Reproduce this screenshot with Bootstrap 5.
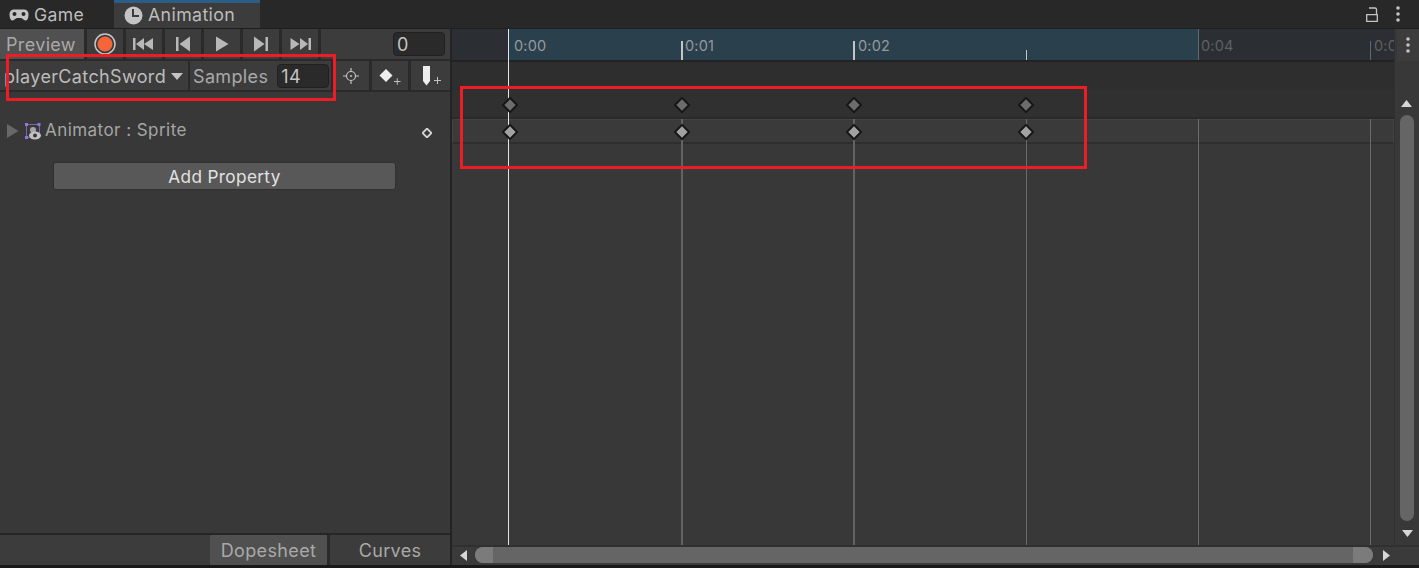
<!DOCTYPE html>
<html lang="en">
<head>
<meta charset="utf-8">
<title>Animation</title>
<link href="https://cdn.jsdelivr.net/npm/bootstrap@5.3.0/dist/css/bootstrap.min.css" rel="stylesheet">
<style>
html,body{height:568px;overflow:hidden;background:#191919;}
body{font-family:Inter,"Liberation Sans",sans-serif;font-size:18px;color:#bdbdbd;position:relative;letter-spacing:.35px;}
.shell{width:1419px;height:565px;background:#232323;}
.tabbar{height:29px;background:#282828;border-bottom:1px solid #1f1f1f;}
.utab{height:28px;}
.utab-game{width:114px;padding-left:9px;padding-top:2px;gap:5px;font-size:17.6px;}
.utab-anim{width:146px;padding-left:10px;gap:5px;background:#3c3c3c;border-top:3px solid #2c5d87;font-size:17.8px;}
.tabend{margin-left:auto;padding-right:19px;gap:18px;height:28px;}
.workarea{height:536px;}
.leftp{width:452px;background:#383838;border-right:2px solid #232323;}
.bar{height:32px;background:#3c3c3c;border-bottom:2px solid #2a2a2a;}
.tbtn{width:39px;background:#3c3c3c;border-left:3px solid #2a2a2a;height:30px;}
.preview{width:84px;background:#505050;padding-left:6px;line-height:32px;color:#a9a9a9;height:30px;white-space:nowrap;overflow:hidden;}
.framecell{flex:1;border-left:3px solid #2a2a2a;height:30px;padding-right:5px;}
.numfield{background:#2a2a2a;border:1px solid #202020;border-radius:4px;height:24px;line-height:24px;padding-left:3px;color:#c4c4c4;}
.fw-a{width:52px;}
.fw-b{width:52px;margin-left:9px;}
.bar2{height:31px;background:#3c3c3c;border-bottom:2px solid #2a2a2a;}
.clipdd{width:190px;height:29px;overflow:hidden;padding-left:4px;padding-top:1px;gap:5px;border-right:2px solid #2a2a2a;white-space:nowrap;color:#bcbcbc;}
.samples{width:143px;height:29px;padding-left:3px;padding-top:1px;border-right:2px solid #2a2a2a;color:#a9a9a9;white-space:nowrap;}
.tbtn2{width:39px;height:29px;border-right:3px solid #2a2a2a;}
.tbtn2:last-child{border-right:0;flex:1;}
.proprow{margin-top:27px;height:24px;padding-left:7px;color:#a5a5a5;font-size:17px;}
.propicon{margin-left:6px;}
.propname{margin-left:3px;letter-spacing:.45px;}
.adddiamond{margin-left:auto;margin-right:18px;margin-top:4px;}
.addwrap{margin-top:18px;padding-left:53px;}
.addbtn{width:343px;height:28px;line-height:27px;background:#585858;border:1px solid #303030;border-radius:3px;text-align:center;color:#e2e2e2;padding:0;font-size:17.2px;letter-spacing:.35px;}
.leftspacer{flex:1;}
.bottomtabs{height:32px;border-top:2px solid #262626;background:#3c3c3c;}
.btab{height:30px;line-height:32px;text-align:center;color:#a9a9a9;}
.btab-fill{width:208px;}
.btab-dope{width:117px;margin-left:2px;background:#505050;}
.btab-curve{width:120px;}
.btabgap{width:3px;background:#2a2a2a;}
.rightp{flex:1;position:relative;background:#383838;}
.timeline{position:absolute;left:0;top:0;width:942px;height:516px;}
.ruler{position:absolute;left:0;top:0;width:942px;height:33px;background:#2b2f33;border-bottom:2px solid #222;}
.inrange{position:absolute;left:57px;top:0;width:689px;height:31px;background:#2b404d;}
.tlabel{position:absolute;top:8px;font-size:14.5px;color:#969a9c;letter-spacing:.2px;line-height:18px;}
.dim{color:#5d6163;}
.tick{position:absolute;background:#c5c5c5;}
.band0{position:absolute;left:0;top:33px;width:942px;height:28px;background:#2e2e2e;}
.band1{position:absolute;left:0;top:61px;width:942px;height:29px;background:#303030;border-bottom:2px solid #2a2a2a;}
.band2{position:absolute;left:0;top:90px;width:942px;height:25px;background:#3a3a3a;border:1px solid #434343;border-bottom:2px solid #2e2e2e;}
.vline{position:absolute;top:90px;width:1px;height:426px;background:#6b6b6b;}
.vline-b{width:2px;background:#636363;}
.vline-main{position:absolute;top:0;left:56px;width:1px;height:516px;background:#e4e4e4;}
.key{position:absolute;width:12px;height:12px;transform:rotate(45deg);border:2px solid #161616;border-radius:1px;background:#6c6c6c;}
.key-lit{background:#a2a2a2;}
.vscroll{position:absolute;left:942px;top:0;width:25px;height:516px;background:#383838;border-left:1px solid #303030;}
.vs-menu{height:32px;margin-left:2px;background:#3c3c3c;}
.vs-track{position:absolute;left:5px;top:86px;width:14px;height:406px;background:#656565;border-radius:7px;}
.hscroll{position:absolute;left:0;top:516px;width:967px;height:20px;background:#3a3a3a;border-top:2px solid #303030;}
.hs-thumb{position:absolute;left:23px;top:0;width:898px;height:16px;background:#656565;border-radius:8px;}
.hs-capl{position:absolute;left:0;top:0;width:18px;height:16px;background:#7b7b7b;border-radius:8px 0 0 8px;}
.hs-capr{position:absolute;right:0;top:0;width:20px;height:16px;background:#7b7b7b;border-radius:0 8px 8px 0;}
.arrow{position:absolute;}
.redbox{position:absolute;border:3px solid #ee1c25;pointer-events:none;}
.redbox-a{left:6px;top:54px;width:330px;height:47px;}
.redbox-b{left:460px;top:86px;width:627px;height:83px;}
</style>
</head>
<body>
<div class="shell d-flex flex-column">
  <div class="tabbar d-flex">
    <div class="utab utab-game d-flex align-items-center">
      <svg width="20" height="12" viewBox="0 0 20 12"><path fill="#c4c4c4" d="M5 0.5h10a4.5 4.5 0 0 1 4.5 4.5c0 4-1 6.500-3 6.500-2 0-3-2.500-4.500-2.500h-4c-1.500 0-2.500 2.500-4.500 2.500s-3-2.500-3-6.500A4.500 4.500 0 0 1 5 .5z"/><circle cx="5.500" cy="5" r="2" fill="#282828"/><circle cx="14.500" cy="5" r="2" fill="#282828"/></svg>
      <span>Game</span>
    </div>
    <div class="utab utab-anim d-flex align-items-center">
      <svg width="19" height="19" viewBox="0 0 19 19"><circle cx="9.500" cy="9.500" r="9" fill="#c4c4c4"/><path d="M9 3v7h6" fill="none" stroke="#3c3c3c" stroke-width="2"/></svg>
      <span>Animation</span>
    </div>
    <div class="tabend d-flex align-items-center">
      <svg width="12" height="15" viewBox="0 0 12 15"><path d="M.7 7.700h10.600v6.600H.7zM3 1h6a1.500 1.500 0 0 1 1.500 1.500v5.200" fill="none" stroke="#c4c4c4" stroke-width="1.300"/></svg>
      <svg width="4" height="16" viewBox="0 0 4 16"><circle cx="2" cy="2" r="1.800" fill="#c4c4c4"/><circle cx="2" cy="8" r="1.800" fill="#c4c4c4"/><circle cx="2" cy="14" r="1.800" fill="#c4c4c4"/></svg>
    </div>
  </div>
  <div class="workarea d-flex">
    <div class="leftp d-flex flex-column">
      <div class="bar d-flex">
        <div class="preview">Preview</div>
        <div class="tbtn d-flex align-items-center justify-content-center">
          <svg width="22" height="22" viewBox="0 0 22 22"><circle cx="11" cy="11" r="10" fill="none" stroke="#c6c6c6" stroke-width="1.500"/><circle cx="11" cy="11" r="7.500" fill="#f6643a"/></svg>
        </div>
        <div class="tbtn d-flex align-items-center justify-content-center">
          <svg width="22" height="14" viewBox="0 0 22 14"><path fill="#b8b8b8" d="M0 1h2.500v12H0zM11 1v12L3 7zM20 1v12l-9-6z"/></svg>
        </div>
        <div class="tbtn d-flex align-items-center justify-content-center">
          <svg width="16" height="16" viewBox="0 0 16 16"><path fill="#b8b8b8" d="M1 1h2.500v14H1zM15 .5v15L4.500 8z"/></svg>
        </div>
        <div class="tbtn d-flex align-items-center justify-content-center">
          <svg width="14" height="16" viewBox="0 0 14 16"><path fill="#b8b8b8" d="M1 .5v15L13.500 8z"/></svg>
        </div>
        <div class="tbtn d-flex align-items-center justify-content-center">
          <svg width="16" height="16" viewBox="0 0 16 16"><path fill="#b8b8b8" d="M12.500 1H15v14h-2.500zM1 .5v15L11.500 8z"/></svg>
        </div>
        <div class="tbtn d-flex align-items-center justify-content-center">
          <svg width="22" height="14" viewBox="0 0 22 14"><path fill="#b8b8b8" d="M19.500 1H22v12h-2.500zM11 1v12l8-6zM1.500 1v12l9-6z"/></svg>
        </div>
        <div class="framecell d-flex align-items-center justify-content-end">
          <div class="numfield fw-a">0</div>
        </div>
      </div>
      <div class="bar2 d-flex">
        <div class="clipdd d-flex align-items-center"><span>playerCatchSword</span><svg class="flex-shrink-0" width="12" height="7" viewBox="0 0 12 7"><path fill="#c4c4c4" d="M0 0h12L6 7z"/></svg></div>
        <div class="samples d-flex align-items-center"><span>Samples</span><div class="numfield fw-b">14</div></div>
        <div class="tbtn2 d-flex align-items-center justify-content-center">
          <svg width="16" height="16" viewBox="0 0 16 16"><circle cx="8" cy="8" r="4.500" fill="none" stroke="#c2c2c2" stroke-width="1.200"/><circle cx="8" cy="8" r="1" fill="#c2c2c2"/><path d="M8 0v3.500M8 12.500V16M0 8h3.500M12.500 8H16" stroke="#c2c2c2" stroke-width="1.200"/></svg>
        </div>
        <div class="tbtn2 d-flex align-items-center justify-content-center">
          <svg width="22" height="18" viewBox="0 0 22 18"><path fill="#eee" d="M7 2l6.500 6.500L7 15 .5 8.500z"/><path d="M15 14.500h6.500M18.250 11.250v6.500" stroke="#c2c2c2" stroke-width="1"/></svg>
        </div>
        <div class="tbtn2 d-flex align-items-center justify-content-center">
          <svg width="22" height="20" viewBox="0 0 22 20"><path fill="#eee" d="M3 0h7v15l-3.500 4.500L3 15z"/><path d="M14 14.500h7M17.500 11v7" stroke="#c2c2c2" stroke-width="1"/></svg>
        </div>
      </div>
      <div class="proprow d-flex align-items-center">
        <svg width="12" height="14" viewBox="0 0 12 14"><path fill="#686868" d="M0 0l11.500 7L0 14z"/></svg>
        <svg class="propicon" width="17" height="17" viewBox="0 0 17 17"><rect x="1.500" y="1.500" width="13" height="13" fill="none" stroke="#7d64b8" stroke-width="1"/><rect x="0" y="0" width="3" height="3" fill="#9279d6"/><rect x="12.500" y="0" width="3" height="3" fill="#9279d6"/><rect x="0" y="13" width="3" height="3" fill="#9279d6"/><circle cx="8" cy="7" r="3" fill="#a5a5a5"/><ellipse cx="10" cy="12.500" rx="6" ry="4" fill="#c2c2c2"/><circle cx="10" cy="12.500" r="2" fill="#383838"/></svg>
        <span class="propname">Animator : Sprite</span>
        <svg class="adddiamond" width="10" height="10" viewBox="0 0 10 10"><path d="M5 .5L9.500 5 5 9.500.5 5z" fill="#383838" stroke="#d4d4d4" stroke-width="1.800"/></svg>
      </div>
      <div class="addwrap"><button type="button" class="btn addbtn">Add Property</button></div>
      <div class="leftspacer"></div>
      <div class="bottomtabs d-flex">
        <div class="btab btab-fill"></div>
        <div class="btab btab-dope">Dopesheet</div>
        <div class="btabgap"></div>
        <div class="btab btab-curve">Curves</div>
      </div>
    </div>
    <div class="rightp">
      <div class="timeline">
        <div class="ruler">
          <div class="inrange"></div>
          <div class="tlabel" style="left:62px">0:00</div>
          <div class="tlabel" style="left:233px">0:01</div>
          <div class="tlabel" style="left:406px">0:02</div>
          <div class="tlabel dim" style="left:749px">0:04</div>
          <div class="tlabel dim" style="left:922px;width:20px;overflow:hidden">0:05</div>
          <div class="tick" style="left:229px;top:12px;width:2px;height:19px"></div>
          <div class="tick" style="left:401px;top:12px;width:2px;height:19px"></div>
          <div class="tick" style="left:574px;top:21px;width:1px;height:10px"></div>
          <div class="tick" style="left:746px;top:0;width:1px;height:31px;background:#5f6a70"></div>
          <div class="tick" style="left:918px;top:12px;width:1px;height:19px;background:#5f6a70"></div>
        </div>
        <div class="band0"></div>
        <div class="band1"></div>
        <div class="band2"></div>
        <div class="vline vline-b" style="left:229px"></div>
        <div class="vline vline-b" style="left:401px"></div>
        <div class="vline" style="left:574px"></div>
        <div class="vline" style="left:746px"></div>
        <div class="vline" style="left:918px"></div>
        <div class="vline-main"></div>
        <div class="key" style="left:52px;top:70px"></div>
        <div class="key" style="left:224px;top:70px"></div>
        <div class="key" style="left:396px;top:70px"></div>
        <div class="key" style="left:568px;top:70px"></div>
        <div class="key key-lit" style="left:52px;top:96.5px"></div>
        <div class="key key-lit" style="left:224px;top:96.5px"></div>
        <div class="key key-lit" style="left:396px;top:96.5px"></div>
        <div class="key key-lit" style="left:568px;top:96.5px"></div>
      </div>
      <div class="vscroll">
        <div class="vs-menu d-flex align-items-center justify-content-center">
          <svg width="4" height="16" viewBox="0 0 4 16"><circle cx="2" cy="2" r="1.800" fill="#c4c4c4"/><circle cx="2" cy="8" r="1.800" fill="#c4c4c4"/><circle cx="2" cy="14" r="1.800" fill="#c4c4c4"/></svg>
        </div>
        <svg class="arrow" style="left:6px;top:71px" width="11" height="7" viewBox="0 0 11 7"><path fill="#d6d6d6" d="M5.500 0l5.500 7H0z"/></svg>
        <div class="vs-track"></div>
        <svg class="arrow" style="left:7px;top:501px" width="11" height="7" viewBox="0 0 11 7"><path fill="#d6d6d6" d="M0 0h11L5.500 7z"/></svg>
      </div>
      <div class="hscroll">
        <svg class="arrow" style="left:8px;top:3px" width="7" height="11" viewBox="0 0 7 11"><path fill="#d6d6d6" d="M7 0v11L0 5.500z"/></svg>
        <div class="hs-thumb"><div class="hs-capl"></div><div class="hs-capr"></div></div>
        <svg class="arrow" style="left:931px;top:3px" width="7" height="11" viewBox="0 0 7 11"><path fill="#d6d6d6" d="M0 0v11l7-5.500z"/></svg>
      </div>
    </div>
  </div>
</div>
<div class="redbox redbox-a"></div>
<div class="redbox redbox-b"></div>
</body>
</html>
